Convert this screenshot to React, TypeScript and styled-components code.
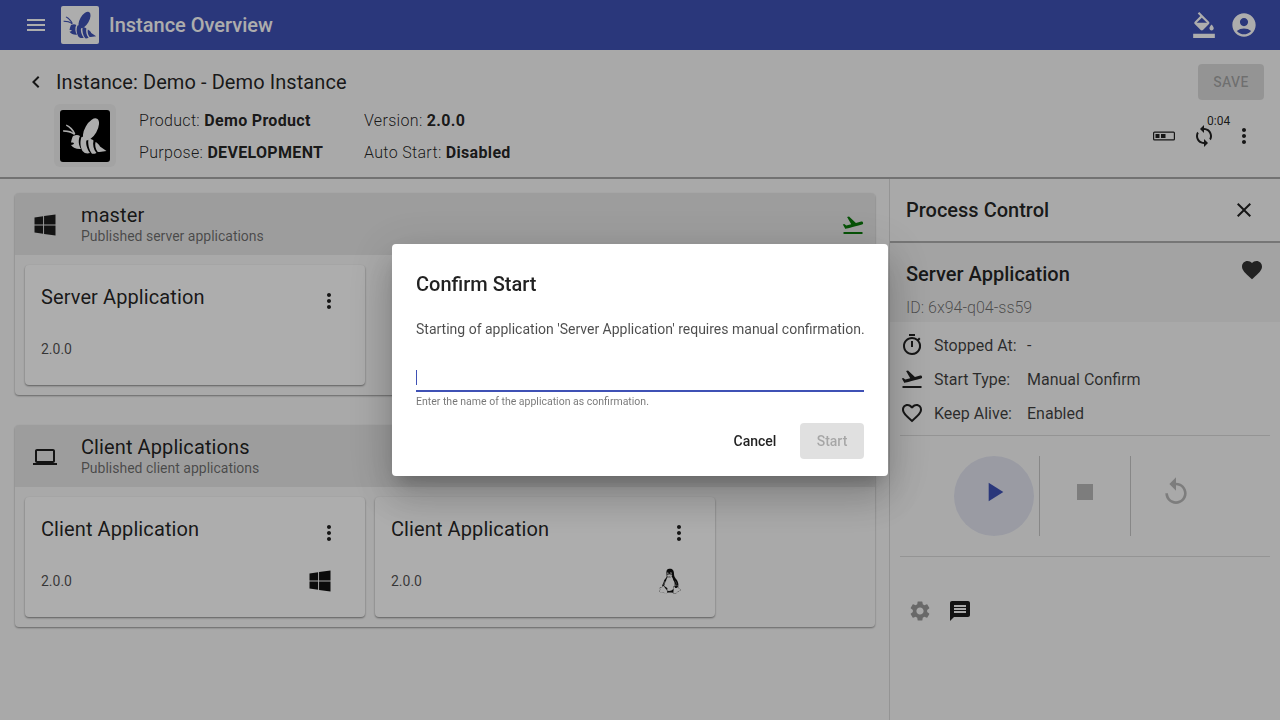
import React from 'react';
import styled, { createGlobalStyle } from 'styled-components';
import {
	MdAccountCircle,
	MdChevronLeft,
	MdClose,
	MdFavorite,
	MdFavoriteBorder,
	MdFlightTakeoff,
	MdFormatColorFill,
	MdLaptop,
	MdMenu,
	MdMessage,
	MdMoreVert,
	MdOutlineTimer,
	MdPlayArrow,
	MdReplay,
	MdSettings,
	MdStop,
} from 'react-icons/md';
import { FaWindows } from 'react-icons/fa';
import { DiLinux } from 'react-icons/di';

const GlobalStyle = createGlobalStyle`
	html, body {
		margin: 0;
		height: 100%;
		overflow: hidden;
		background: #fafafa;
		font-family: Roboto, "Liberation Sans", sans-serif;
		color: rgba(0, 0, 0, 0.87);
	}
	* {
		box-sizing: border-box;
	}
`;

const Bee = ({ size, color }: { size: number; color: string }) => (
	<svg width={size} height={size} viewBox="0 0 48 48" fill={color}>
		<ellipse cx="30" cy="17.400" rx="6" ry="12.300" transform="rotate(30 30 17.400)" />
		<path d="M5.400 12.500c4 1.500 7 4.800 9 9.200l-1.300.6c-2-3.900-4.700-6.800-8.100-8.600z" />
		<path d="M2 18.300c4.500-.3 8.500.7 12 3.400l-.7 1.200c-3.400-2.200-7.100-3.100-11.100-3.100z" />
		<path d="M12 24c3-1.500 5-1.500 7 0-2 4-1.500 9 1 13-4 .5-8-1-10-4 1.500 0 3-1 3-2-1-.5-2-.5-3-.5.3-2 1-4.500 2-6.500z" />
		<path d="M20.500 25c2.500-1 4.500-.5 5.500 1-2 5 0 11 3 15-2.500 1-5.500.5-7.500-2-2.500-4.500-2.500-10-1-14z" />
		<path d="M27.500 26.500c2 0 4 1 5 2-1 4 0 9 3 12.500-1.500.7-3 1-4.500.8-3-4-4.500-10-3.500-15.300z" />
		<path d="M34.500 30c2 1 3.500 2.500 4.500 4.500l6.500 4.500-7 1c-1 0-1.500 0-2-.2-2-3-2.800-6.500-2-9.800z" />
	</svg>
);

const Page = styled.div`
	width: 1280px;
	height: 720px;
	display: flex;
	flex-direction: column;
`;

const TopBar = styled.header`
	height: 50px;
	flex: none;
	background: #3f51b5;
	color: #fff;
	display: flex;
	align-items: center;
	padding: 0 24px;
`;

const LogoBox = styled.div`
	width: 38px;
	height: 38px;
	margin-left: 13px;
	background: #fff;
	border-radius: 2px;
	display: flex;
	align-items: center;
	justify-content: center;
`;

const AppTitle = styled.div`
	margin-left: 10px;
	font-size: 20px;
	font-weight: 500;
	flex: 1;
`;

const TopActions = styled.div`
	display: flex;
	align-items: center;
	gap: 13px;
	margin-right: -2px;
`;

const SubHeader = styled.section`
	height: 129px;
	flex: none;
	border-bottom: 2px solid rgba(0, 0, 0, 0.32);
	padding: 14px 16px 0 24px;
	display: flex;
	justify-content: space-between;
`;

const SubLeft = styled.div`
	display: flex;
	flex-direction: column;
`;

const BackRow = styled.div`
	height: 36px;
	display: flex;
	align-items: center;
	font-size: 20px;
	gap: 8px;
	letter-spacing: 0.08px;
`;

const InfoRow = styled.div`
	display: flex;
	margin-top: 4px;
	margin-left: 30px;
`;

const ProductLogo = styled.div`
	width: 62px;
	height: 63px;
	background: #f0f0f0;
	border-radius: 6px;
	display: flex;
	align-items: center;
	justify-content: center;
`;

const ProductSquare = styled.div`
	width: 50px;
	height: 52px;
	background: #000;
	border-radius: 3px;
	display: flex;
	align-items: center;
	justify-content: center;
`;

const InfoGrid = styled.div`
	display: grid;
	grid-template-columns: 225px auto;
	grid-auto-rows: 32px;
	margin-left: 23px;
	margin-top: 1px;
	font-size: 16px;
	font-weight: 300;
	line-height: 32px;
	letter-spacing: 0.32px;
	color: rgba(0, 0, 0, 0.87);
`;

const InfoValue = styled.b`
	font-weight: 700;
`;

const SubRight = styled.div`
	display: flex;
	flex-direction: column;
	align-items: flex-end;
`;

const SaveButton = styled.div`
	width: 66px;
	height: 36px;
	padding-bottom: 1px;
	background: rgba(0, 0, 0, 0.12);
	color: rgba(0, 0, 0, 0.26);
	border-radius: 4px;
	font-size: 14px;
	font-weight: 500;
	letter-spacing: 0.4px;
	display: flex;
	align-items: center;
	justify-content: center;
`;

const HeaderTools = styled.div`
	display: flex;
	align-items: center;
	margin-top: 24px;
	height: 24px;
	margin-right: 8px;
`;

const SyncWrap = styled.div`
	position: relative;
	display: flex;
	margin: 0 16px;
`;

const SyncBadge = styled.span`
	position: absolute;
	left: 15px;
	top: -10px;
	font-size: 12px;
	line-height: 14px;
`;

const Body = styled.main`
	flex: 1;
	display: flex;
	min-height: 0;
`;

const Groups = styled.div`
	width: 889px;
	flex: none;
	padding: 14px 14px 0 15px;
	display: flex;
	flex-direction: column;
	gap: 30px;
`;

const Group = styled.section`
	border-radius: 4px;
	background: #fafafa;
	box-shadow: 0 1px 2px rgba(0, 0, 0, 0.4);
`;

const GroupHeader = styled.div`
	height: 62px;
	background: #e8e8e8;
	border-radius: 4px 4px 0 0;
	display: flex;
	align-items: center;
	padding: 2px 10px 0 18px;
`;

const GroupIcon = styled.div`
	width: 24px;
	height: 24px;
	margin-right: 24px;
	display: flex;
	align-items: center;
	justify-content: center;
	color: rgba(0, 0, 0, 0.87);
`;

const GroupText = styled.div`
	flex: 1;
`;

const GroupName = styled.div`
	font-size: 20px;
	line-height: 22px;
	letter-spacing: 0.1px;
`;

const GroupSub = styled.div`
	font-size: 14px;
	line-height: 20px;
	color: rgba(0, 0, 0, 0.54);
`;

const CardRow = styled.div`
	display: flex;
	gap: 10px;
	padding: 10px;
`;

const Card = styled.article`
	width: 340px;
	height: 120px;
	background: #fff;
	border-radius: 4px;
	box-shadow: 0 1px 2px rgba(0, 0, 0, 0.45);
	padding: 20px 20px 0 16px;
	display: flex;
	flex-direction: column;
`;

const CardTop = styled.div`
	display: flex;
	justify-content: space-between;
	height: 44px;
`;

const CardTitle = styled.div`
	font-size: 20px;
	line-height: 24px;
	letter-spacing: 0.1px;
`;

const CardMenu = styled.div`
	margin: 4px 4px 0 0;
	display: flex;
`;

const CardBottom = styled.div`
	display: flex;
	justify-content: space-between;
	align-items: center;
	height: 40px;
`;

const Version = styled.div`
	font-size: 14px;
	color: rgba(0, 0, 0, 0.7);
`;

const OsIcon = styled.div`
	width: 26px;
	height: 26px;
	margin-right: 12px;
	display: flex;
	align-items: center;
	justify-content: center;
`;

const Panel = styled.aside`
	flex: 1;
	border-left: 1px solid rgba(0, 0, 0, 0.12);
	display: flex;
	flex-direction: column;
`;

const PanelHeader = styled.div`
	height: 64px;
	flex: none;
	border-bottom: 2px solid rgba(0, 0, 0, 0.3);
	display: flex;
	align-items: flex-start;
	justify-content: space-between;
	padding: 19px 24px 0 16px;
	font-size: 20px;
	line-height: 24px;
	font-weight: 500;
`;

const ProcessHead = styled.div`
	height: 79px;
	flex: none;
	background: #f0f0f0;
	padding: 17px 16px 0;
`;

const ProcessTitleRow = styled.div`
	display: flex;
	justify-content: space-between;
	font-size: 20px;
	line-height: 28px;
	font-weight: 500;
`;

const HeartSlot = styled.div`
	margin-top: -2px;
	display: flex;
`;

const ProcessId = styled.div`
	font-size: 16px;
	font-weight: 300;
	line-height: 20px;
	margin-top: 10px;
	color: rgba(0, 0, 0, 0.54);
`;

const Details = styled.div`
	margin: 6px 10px 0;
	padding: 0 2px 5px;
	border-bottom: 1px solid rgba(0, 0, 0, 0.12);
`;

const DetailRow = styled.div`
	height: 34px;
	display: flex;
	align-items: center;
	font-size: 16px;
	color: rgba(0, 0, 0, 0.75);
`;

const DetailIcon = styled.div`
	width: 24px;
	height: 24px;
	margin-right: 10px;
	margin-left: -2px;
	display: flex;
	color: rgba(0, 0, 0, 0.87);
`;

const DetailLabel = styled.div`
	width: 93px;
`;

const Controls = styled.div`
	margin: 0 10px;
	padding: 20px 0;
	height: 121px;
	flex: none;
	border-bottom: 1px solid rgba(0, 0, 0, 0.12);
	display: flex;
	align-items: flex-start;
`;

const PlaySlot = styled.div`
	width: 140px;
	height: 80px;
	padding-left: 54px;
	border-right: 1px solid rgba(0, 0, 0, 0.2);
`;

const PlayCircle = styled.div`
	width: 80px;
	height: 80px;
	border-radius: 50%;
	background: rgba(63, 81, 181, 0.12);
	display: flex;
	justify-content: center;
	padding-top: 20px;
	color: #3f51b5;
`;

const ControlSlot = styled.div<{ $divider?: boolean }>`
	width: ${(p) => (p.$divider ? '91px' : '89px')};
	height: 80px;
	display: flex;
	justify-content: center;
	padding-top: 20px;
	color: rgba(0, 0, 0, 0.26);
	${(p) => p.$divider && 'border-right: 1px solid rgba(0, 0, 0, 0.2);'}
`;

const PanelTabs = styled.div`
	display: flex;
	gap: 16px;
	padding: 42px 0 0 18px;
`;

const Tab = styled.div<{ $active?: boolean }>`
	display: flex;
	color: ${(p) => (p.$active ? '#1c1c1c' : 'rgba(0, 0, 0, 0.38)')};
`;

const Backdrop = styled.div`
	position: fixed;
	inset: 0;
	background: rgba(0, 0, 0, 0.32);
	display: flex;
	align-items: center;
	justify-content: center;
`;

const Dialog = styled.div`
	width: 496px;
	height: 232px;
	background: #fff;
	border-radius: 4px;
	padding: 24px;
	box-shadow: 0 11px 15px -7px rgba(0, 0, 0, 0.2), 0 24px 38px 3px rgba(0, 0, 0, 0.14),
		0 9px 46px 8px rgba(0, 0, 0, 0.12);
`;

const DialogTitle = styled.h2`
	margin: 0;
	font-size: 20px;
	line-height: 32px;
	font-weight: 500;
	height: 32px;
`;

const DialogText = styled.p`
	margin: 19px 0 0;
	font-size: 14px;
	line-height: 20px;
	color: rgba(0, 0, 0, 0.7);
	white-space: nowrap;
`;

const Field = styled.div`
	height: 30px;
	margin-top: 23px;
	border-bottom: 2px solid #3f51b5;
	display: flex;
	align-items: flex-end;
	padding-bottom: 5px;
`;

const Caret = styled.span`
	width: 1px;
	height: 15px;
	background: #3f51b5;
`;

const FieldHint = styled.div`
	font-size: 10.5px;
	line-height: 14px;
	margin-top: 3px;
	color: rgba(0, 0, 0, 0.54);
`;

const DialogActions = styled.div`
	display: flex;
	justify-content: flex-end;
	align-items: center;
	gap: 8px;
	margin-top: 14px;
`;

const DialogButton = styled.div<{ $disabled?: boolean }>`
	height: 36px;
	width: ${(p) => (p.$disabled ? '64px' : '74px')};
	display: flex;
	align-items: center;
	justify-content: center;
	border-radius: 4px;
	font-size: 14px;
	font-weight: 500;
	color: ${(p) => (p.$disabled ? 'rgba(0, 0, 0, 0.26)' : 'rgba(0, 0, 0, 0.87)')};
	background: ${(p) => (p.$disabled ? 'rgba(0, 0, 0, 0.12)' : 'transparent')};
`;

const NodeStateIcon = () => (
	<svg width="24" height="24" viewBox="0 0 24 24" fill="currentColor">
		<path d="M2.500 7.500h19a1.500 1.500 0 0 1 1.500 1.500v6a1.500 1.500 0 0 1-1.500 1.500h-19A1.500 1.500 0 0 1 1 15V9a1.500 1.500 0 0 1 1.500-1.500zm0 1.200a.3.3 0 0 0-.3.3v6a.3.3 0 0 0 .3.3h19a.3.3 0 0 0 .3-.3V9a.3.3 0 0 0-.3-.3z" />
		<rect x="3.500" y="10" width="4" height="4" />
		<rect x="9" y="10" width="4.500" height="4" />
	</svg>
);

const AppCard = ({ title, os }: { title: string; os?: React.ReactNode }) => (
	<Card>
		<CardTop>
			<CardTitle>{title}</CardTitle>
			<CardMenu>
				<MdMoreVert size={24} />
			</CardMenu>
		</CardTop>
		<CardBottom>
			<Version>2.0.0</Version>
			{os && <OsIcon>{os}</OsIcon>}
		</CardBottom>
	</Card>
);

const App = () => (
	<>
		<GlobalStyle />
		<Page>
			<TopBar>
				<MdMenu size={24} />
				<LogoBox>
					<Bee size={36} color="#3f51b5" />
				</LogoBox>
				<AppTitle>Instance Overview</AppTitle>
				<TopActions>
					<MdFormatColorFill size={26} />
					<MdAccountCircle size={28} />
				</TopActions>
			</TopBar>
			<SubHeader>
				<SubLeft>
					<BackRow>
						<MdChevronLeft size={24} />
						Instance: Demo - Demo Instance
					</BackRow>
					<InfoRow>
						<ProductLogo>
							<ProductSquare>
								<Bee size={48} color="#fff" />
							</ProductSquare>
						</ProductLogo>
						<InfoGrid>
							<div>
								Product: <InfoValue>Demo Product</InfoValue>
							</div>
							<div>
								Version: <InfoValue>2.0.0</InfoValue>
							</div>
							<div>
								Purpose: <InfoValue>DEVELOPMENT</InfoValue>
							</div>
							<div>
								Auto Start: <InfoValue>Disabled</InfoValue>
							</div>
						</InfoGrid>
					</InfoRow>
				</SubLeft>
				<SubRight>
					<SaveButton>SAVE</SaveButton>
					<HeaderTools>
						<NodeStateIcon />
						<SyncWrap>
							<svg width="24" height="24" viewBox="0 0 24 24" fill="currentColor">
								<path d="M12 4V1L8 5l4 4V6c3.310 0 6 2.690 6 6 0 1.010-.25 1.970-.7 2.800l1.460 1.460C19.540 15.030 20 13.570 20 12c0-4.420-3.580-8-8-8zm0 14c-3.310 0-6-2.690-6-6 0-1.010.25-1.970.7-2.800L5.240 7.740C4.460 8.970 4 10.430 4 12c0 4.420 3.580 8 8 8v3l4-4-4-4v3z" />
							</svg>
							<SyncBadge>0:04</SyncBadge>
						</SyncWrap>
						<MdMoreVert size={24} />
					</HeaderTools>
				</SubRight>
			</SubHeader>
			<Body>
				<Groups>
					<Group>
						<GroupHeader>
							<GroupIcon>
								<FaWindows size={24} />
							</GroupIcon>
							<GroupText>
								<GroupName>master</GroupName>
								<GroupSub>Published server applications</GroupSub>
							</GroupText>
							<MdFlightTakeoff size={24} color="#0a7a0a" />
						</GroupHeader>
						<CardRow>
							<AppCard title="Server Application" />
						</CardRow>
					</Group>
					<Group>
						<GroupHeader>
							<GroupIcon>
								<MdLaptop size={26} />
							</GroupIcon>
							<GroupText>
								<GroupName>Client Applications</GroupName>
								<GroupSub>Published client applications</GroupSub>
							</GroupText>
						</GroupHeader>
						<CardRow>
							<AppCard title="Client Application" os={<FaWindows size={24} color="#111" />} />
							<AppCard title="Client Application" os={<DiLinux size={28} color="#111" />} />
						</CardRow>
					</Group>
				</Groups>
				<Panel>
					<PanelHeader>
						Process Control
						<MdClose size={24} />
					</PanelHeader>
					<ProcessHead>
						<ProcessTitleRow>
							Server Application
							<HeartSlot>
								<MdFavorite size={24} color="#333" />
							</HeartSlot>
						</ProcessTitleRow>
						<ProcessId>ID: 6x94-q04-ss59</ProcessId>
					</ProcessHead>
					<Details>
						<DetailRow>
							<DetailIcon>
								<MdOutlineTimer size={24} />
							</DetailIcon>
							<DetailLabel>Stopped At:</DetailLabel>-
						</DetailRow>
						<DetailRow>
							<DetailIcon>
								<MdFlightTakeoff size={24} />
							</DetailIcon>
							<DetailLabel>Start Type:</DetailLabel>Manual Confirm
						</DetailRow>
						<DetailRow>
							<DetailIcon>
								<MdFavoriteBorder size={24} />
							</DetailIcon>
							<DetailLabel>Keep Alive:</DetailLabel>Enabled
						</DetailRow>
					</Details>
					<Controls>
						<PlaySlot>
							<PlayCircle>
								<MdPlayArrow size={32} />
							</PlayCircle>
						</PlaySlot>
						<ControlSlot $divider>
							<MdStop size={32} />
						</ControlSlot>
						<ControlSlot>
							<MdReplay size={32} />
						</ControlSlot>
					</Controls>
					<PanelTabs>
						<Tab>
							<MdSettings size={24} />
						</Tab>
						<Tab $active>
							<MdMessage size={24} />
						</Tab>
					</PanelTabs>
				</Panel>
			</Body>
		</Page>
		<Backdrop>
			<Dialog>
				<DialogTitle>Confirm Start</DialogTitle>
				<DialogText>Starting of application 'Server Application' requires manual confirmation.</DialogText>
				<Field>
					<Caret />
				</Field>
				<FieldHint>Enter the name of the application as confirmation.</FieldHint>
				<DialogActions>
					<DialogButton>Cancel</DialogButton>
					<DialogButton $disabled>Start</DialogButton>
				</DialogActions>
			</Dialog>
		</Backdrop>
	</>
);

export default App;
